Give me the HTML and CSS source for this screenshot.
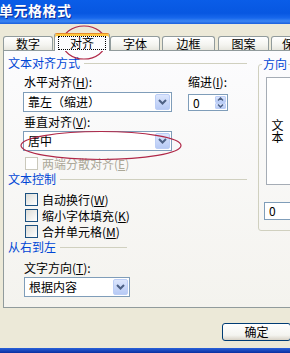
FILE: index.html
```html
<!DOCTYPE html>
<html lang="zh-CN">
<head>
<meta charset="utf-8">
<link rel="stylesheet" href="styles.css">
</head>
<body>
<div class="win">
  <div class="titlebar"><span class="title">单元格格式</span></div>
  <div class="tabs">
    <div class="tab t-num">数字</div>
    <div class="tab active"><span class="focus">对齐</span></div>
    <div class="tab t-font">字体</div>
    <div class="tab t-border">边框</div>
    <div class="tab t-pattern">图案</div>
    <div class="tab t-protect">保</div>
  </div>
  <div class="panel">
    <div class="left">
      <div class="legend">文本对齐方式</div>
      <div class="hrow">
        <div class="hfield">
          <div class="label">水平对齐(<u>H</u>):</div>
          <div class="combo">
            <span class="val">靠左（缩进）</span>
            <span class="drop"><svg width="9" height="6" viewBox="0 0 9 6"><path d="M1 1 L4.5 4.5 L8 1" fill="none" stroke="#4D6185" stroke-width="2"/></svg></span>
          </div>
        </div>
        <div class="ifield">
          <div class="label">缩进(<u>I</u>):</div>
          <div class="spin">
            <span class="val">0</span>
            <span class="spinbtns">
              <span class="sb"><svg width="7" height="4" viewBox="0 0 7 4"><path d="M1 3.5 L3.5 1 L6 3.5" fill="none" stroke="#4D6185" stroke-width="1.5"/></svg></span>
              <span class="sb"><svg width="7" height="4" viewBox="0 0 7 4"><path d="M1 0.5 L3.5 3 L6 0.5" fill="none" stroke="#4D6185" stroke-width="1.5"/></svg></span>
            </span>
          </div>
        </div>
      </div>
      <div class="label vlabel">垂直对齐(<u>V</u>):</div>
      <div class="combo combo-v">
        <span class="val">居中</span>
        <span class="drop"><svg width="9" height="6" viewBox="0 0 9 6"><path d="M1 1 L4.5 4.5 L8 1" fill="none" stroke="#4D6185" stroke-width="2"/></svg></span>
      </div>
      <div class="check disabled c-justify"><span class="box"></span>两端分散对齐(<u>E</u>)</div>

      <div class="legend l-control">文本控制</div>
      <div class="check c-wrap"><span class="box"></span>自动换行(<u>W</u>)</div>
      <div class="check c-next"><span class="box"></span>缩小字体填充(<u>K</u>)</div>
      <div class="check c-next"><span class="box"></span>合并单元格(<u>M</u>)</div>

      <div class="legend short l-rtl">从右到左</div>
      <div class="label dlabel">文字方向(<u>T</u>):</div>
      <div class="combo combo-d">
        <span class="val">根据内容</span>
        <span class="drop"><svg width="9" height="6" viewBox="0 0 9 6"><path d="M1 1 L4.5 4.5 L8 1" fill="none" stroke="#4D6185" stroke-width="2"/></svg></span>
      </div>
    </div>
    <div class="right">
      <fieldset class="dir">
        <legend>方向</legend>
        <div class="orient"><span class="vtext">文本</span></div>
        <div class="spin dirspin"><span class="val">0</span></div>
      </fieldset>
    </div>
  </div>
  <div class="footer">
    <div class="btn">确定</div>
  </div>
  <div class="frame-bottom"></div>
</div>
<svg class="marks" width="290" height="353" viewBox="0 0 290 353">
  <ellipse cx="84" cy="42.5" rx="21.5" ry="16.5" fill="none" stroke="#B02848" stroke-width="1.2"/>
  <ellipse cx="101" cy="145.5" rx="80" ry="14" fill="none" stroke="#B02848" stroke-width="1.2"/>
</svg>
</body>
</html>
```

FILE: styles.css
```css
* { box-sizing: border-box; margin: 0; padding: 0; }
html, body { width: 290px; height: 353px; overflow: hidden; }
body {
  background: #ECE9D8;
  font-family: "Noto Sans CJK SC", "Noto Sans", sans-serif;
  font-size: 12px;
  line-height: 12px;
  color: #000;
  position: relative;
}
u { text-decoration: underline; text-underline-offset: 1px; }

.win { width: 290px; height: 353px; overflow: hidden; }

.titlebar {
  height: 24px;
  background: linear-gradient(#0A5DE8 0%, #0757E1 55%, #1767EC 75%, #3C86F3 88%, #1B60DC 100%);
}
.title {
  display: block;
  margin-left: -1px;
  font-size: 14px;
  font-weight: bold;
  line-height: 20px;
  letter-spacing: 0.5px;
  color: #fff;
  text-shadow: 1px 1px 0 #0B2E9E;
  white-space: nowrap;
}

.tabs {
  display: flex;
  align-items: flex-end;
  height: 17px;
  margin-top: 9px;
  padding-left: 3px;
  position: relative;
  z-index: 1;
}
.tab {
  flex: none;
  width: 50px;
  height: 14px;
  border: 1px solid #919B9C;
  border-bottom: 0;
  border-radius: 3px 3px 0 0;
  background: linear-gradient(#FFFFFF, #F4F4F0 60%, #E7E6DE);
  text-align: center;
  line-height: 13px;
  white-space: nowrap;
}
.tab.active {
  width: 56px;
  height: 18px;
  margin-left: 1px;
  margin-bottom: -1px;
  padding-top: 2px;
  background: #FCFCFE;
  border-top: 1px solid #E68B2C;
  box-shadow: inset 0 2px 0 #FFC83C;
}
.focus {
  display: block;
  margin: 0 3px;
  height: 14px;
  border: 1px dotted #000;
  line-height: 12px;
}
.t-border { margin-left: 2px; width: 53px; }
.t-pattern { margin-left: 3px; width: 51px; }
.t-protect { margin-left: 2px; text-align: left; padding-left: 10px; }

.panel {
  display: flex;
  margin-left: 3px;
  width: 300px;
  height: 258px;
  border: 1px solid #919B9C;
  background: linear-gradient(#FCFCFE, #F4F3EE);
}

.left { width: 246px; padding: 6px 3px 0 4px; flex: none; }

.legend {
  display: flex;
  align-items: center;
  height: 12px;
  color: #0046D5;
  white-space: nowrap;
}
.legend::after {
  content: "";
  flex: 1;
  height: 1px;
  margin-left: 4px;
  background: #D0D0BF;
}
.legend.short { width: 119px; }

.label { height: 12px; white-space: nowrap; }

.hrow { display: flex; margin-top: 7px; }
.hfield { margin-left: 15px; width: 149px; }
.hfield .label { padding-left: 1px; }
.ifield { margin-left: 16px; width: 40px; }

.combo {
  display: flex;
  height: 20px;
  margin-top: 4px;
  padding: 1px;
  border: 1px solid #7F9DB9;
  background: #fff;
}
.combo .val { flex: 1; padding-left: 3px; line-height: 16px; white-space: nowrap; }
.drop {
  width: 15px;
  display: flex;
  align-items: center;
  justify-content: center;
  border: 1px solid #BCCEF6;
  border-radius: 2px;
  background: linear-gradient(#DCE6FD, #B7CAF5);
}

.spin {
  display: flex;
  height: 17px;
  margin-top: 6px;
  padding: 1px;
  border: 1px solid #7F9DB9;
  background: #fff;
}
.spin .val { flex: 1; padding-left: 3px; line-height: 13px; }
.spinbtns { width: 11px; display: flex; flex-direction: column; }
.sb {
  flex: 1;
  display: flex;
  align-items: center;
  justify-content: center;
  border: 1px solid #BCCEF6;
  border-radius: 1px;
  background: linear-gradient(#DCE6FD, #B7CAF5);
}

.vlabel { margin: 4px 0 0 16px; }
.combo-v { margin: 3px 0 0 15px; width: 149px; }

.check {
  display: flex;
  align-items: center;
  height: 13px;
  margin-left: 17px;
  white-space: nowrap;
}
.box {
  width: 13px;
  height: 13px;
  margin-right: 4px;
  border: 1px solid #1C5180;
  background: linear-gradient(135deg, #DCDCD7, #FFFFFF);
  flex: none;
}
.check.disabled { color: #ACA899; }
.check.disabled .box { border-color: #CAC8BB; background: #fff; }
.c-justify { margin-top: 6px; }
.l-control { margin-top: 3px; }
.c-wrap { margin-top: 8px; }
.c-next { margin-top: 3px; }
.l-rtl { margin-top: 3px; }
.dlabel { margin: 9px 0 0 16px; }
.combo-d { margin: 3px 0 0 16px; width: 106px; }

.right { padding-top: 7px; flex: none; }
.dir {
  margin-left: 8px;
  width: 60px;
  height: 173px;
  padding: 0 0 0 7px;
  border: 1px solid #D0D0BF;
  border-radius: 3px;
}
.dir legend {
  margin-left: -4px;
  padding: 0 1px;
  line-height: 12px;
  color: #0046D5;
}
.orient {
  display: flex;
  align-items: center;
  width: 40px;
  height: 108px;
  margin-top: 7px;
  padding-left: 4px;
  border: 1px solid #A5ACB5;
  background: #fff;
}
.vtext {
  writing-mode: vertical-rl;
  text-orientation: upright;
  line-height: 12px;
}
.dirspin { margin: 17px 0 0 -2px; width: 40px; height: 18px; }

.footer { height: 40px; padding: 15px 0 0 222px; }
.btn {
  width: 69px;
  height: 18px;
  border: 1px solid #003C74;
  border-radius: 3px;
  background: linear-gradient(#FFFFFF, #F4F4F0 70%, #D8D2C6);
  text-align: center;
  line-height: 16px;
}

.frame-bottom { height: 5px; background: linear-gradient(#2A62DA, #0A2E9F); }

.marks { position: absolute; left: 0; top: 0; pointer-events: none; }
```
